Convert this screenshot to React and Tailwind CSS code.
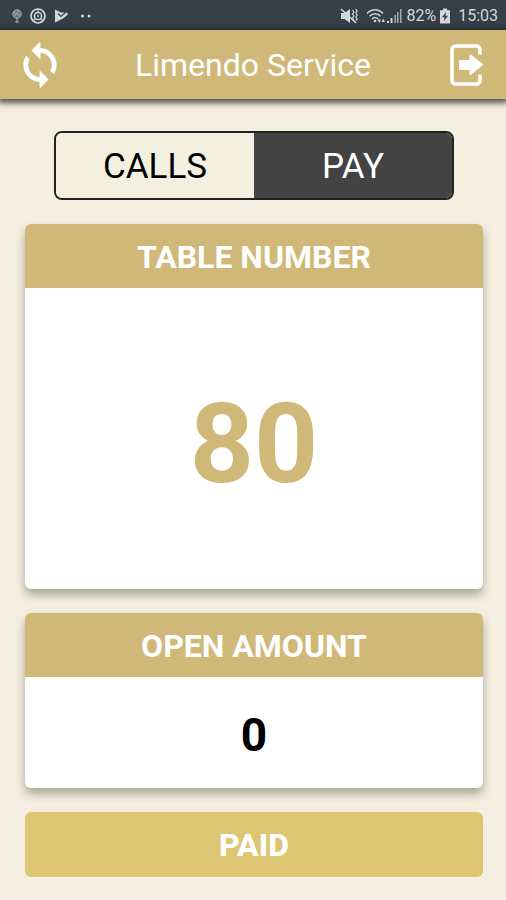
import { IoMdSync } from 'react-icons/io';

function StatusBar() {
  return (
    <div className="flex h-[30px] items-center justify-between bg-[#363e48] pt-px pr-2 pl-3 text-[#d3d6da]">
      <div className="flex items-center gap-2">
        <svg viewBox="0 0 10 14" className="h-[14px] w-[10px]" fill="none" stroke="currentColor" opacity="0.75">
          <circle cx="5" cy="5" r="4.2" fill="#7d838a" />
          <path d="M2 3.5l6 3M2.5 7L7 2M5 9v3.4" />
          <path d="M3.4 13h3.2" strokeWidth="1.4" />
        </svg>
        <svg viewBox="0 0 16 16" className="h-4 w-4" fill="none" stroke="currentColor">
          <circle cx="8" cy="8" r="7" strokeWidth="1.7" />
          <circle cx="8" cy="8" r="3.6" strokeWidth="1.5" />
          <circle cx="8" cy="8" r="1" fill="currentColor" stroke="none" />
          <path d="M8 4.4V1.6M3.5 12.5l2-2M12.5 12.5l-2-2" strokeWidth="1.1" />
        </svg>
        <svg viewBox="0 0 14 14" className="h-[14px] w-[14px]">
          <path d="M1 0.5L7 3.6 13.5 3.6V6L9 9.5 1 13.5z" fill="currentColor" />
          <path d="M4 4.5l3 3L12 3" fill="none" stroke="#363e48" strokeWidth="1.1" />
        </svg>
        <svg viewBox="0 0 20 4" className="h-1 w-5" fill="currentColor">
          <circle cx="6.5" cy="2" r="1.5" />
          <circle cx="13" cy="2" r="1.5" />
        </svg>
      </div>
      <div className="flex items-center gap-1">
        <svg viewBox="0 0 18 16" className="h-4 w-[18px]" fill="currentColor">
          <path d="M1 5h3.5L10 1v14L4.5 11H1z" />
          <path d="M1 1l15 14" stroke="currentColor" strokeWidth="1.5" />
          <path
            d="M12.5 2l1.5 2-1.5 2 1.5 2-1.5 2 1.5 2M15.8 1l1.4 2-1.4 2 1.4 2-1.4 2 1.4 2-1.4 2"
            fill="none"
            stroke="currentColor"
            strokeWidth="1.2"
          />
        </svg>
        <div className="flex items-center pl-1">
          <svg viewBox="0 0 20 16" className="h-4 w-5" fill="none" stroke="currentColor" strokeWidth="1.4">
            <path d="M1 5.5C5.5 0.5 12.5 0.5 17 5.5M3.5 8.3c3.2-3.4 7.8-3.4 11 0M6 11c1.9-2 4.1-2 6 0" />
            <circle cx="9" cy="13" r="1.3" fill="currentColor" stroke="none" />
            <path d="M11.5 11.5H15l-1.75 3.5zM15.5 14H19l-1.75-3.5z" fill="currentColor" stroke="none" />
          </svg>
          <svg viewBox="0 0 16 16" className="h-4 w-4" fill="currentColor">
            <path d="M1 13h2v2H1zM4.5 10h2v5h-2z" />
            <path d="M8.5 7H10v8H8.5zM11 4h1.5v11H11zM14 1h1.5v14H14z" opacity="0.7" />
          </svg>
        </div>
        <span className="text-base leading-5">82%</span>
        <svg viewBox="0 0 10 16" className="h-4 w-[10px]">
          <path d="M3 0.5h4v1.8h3v13.2H0V2.3h3z" fill="currentColor" />
          <path d="M6 4L2 9.3h2.5L4 13l4-5.3H5.5z" fill="#363e48" />
        </svg>
        <span className="pl-1 text-base leading-5">15:03</span>
      </div>
    </div>
  );
}

function ExitIcon() {
  return (
    <svg viewBox="0 0 36 44" className="h-11 w-9" fill="none" stroke="currentColor">
      <path
        d="M32 11.5V6.5A3.5 3.5 0 0 0 28.5 3h-21A3.5 3.5 0 0 0 4 6.5v31A3.5 3.5 0 0 0 7.500 41h21a3.5 3.5 0 0 0 3.5-3.5V31.5"
        strokeWidth="3.6"
      />
      <path
        d="M12 18H22.5V12.5L34 21.500 22.5 31V26H12z"
        fill="currentColor"
        strokeWidth="2"
        strokeLinejoin="round"
      />
    </svg>
  );
}

function Header() {
  return (
    <header className="flex h-[69px] items-center justify-between bg-[#d0b978] px-4 text-white shadow-[0_2px_6px_2px_rgba(0,0,0,0.65)]">
      <button type="button" aria-label="Refresh" className="flex w-12 justify-center">
        <IoMdSync
          className="h-[52px] w-[52px] shrink-0 stroke-current"
          strokeWidth="8"
          strokeLinejoin="round"
        />
      </button>
      <h1 className="text-[32px] leading-10">Limendo Service</h1>
      <button type="button" aria-label="Log out" className="flex w-12 justify-center">
        <ExitIcon />
      </button>
    </header>
  );
}

function Card({ title, children }) {
  return (
    <section className="overflow-hidden rounded-md bg-white shadow-[0_6px_10px_rgba(60,60,40,0.4)]">
      <h2 className="bg-[#d0b978] pt-[13px] pb-[11px] text-center text-[32px] leading-10 font-bold text-white">
        {title}
      </h2>
      {children}
    </section>
  );
}

export default function App() {
  return (
    <div className="min-h-screen bg-[#f4efe1] font-['Roboto',sans-serif]">
      <StatusBar />
      <Header />

      <main className="flex flex-col gap-6 pt-8 pr-[23px] pb-[23px] pl-[25px]">
        <div className="mx-[29px] flex h-[69px] overflow-hidden rounded-lg border-2 border-[#222222] text-[35px]">
          <button type="button" className="flex-1 bg-[#f4f0e0] pt-1 text-black">
            CALLS
          </button>
          <button type="button" aria-pressed="true" className="flex-1 bg-[#434343] pt-1 text-white">
            PAY
          </button>
        </div>

        <Card title="TABLE NUMBER">
          <p className="pt-24 pb-[85px] text-center text-[112px] leading-[120px] font-bold text-[#d0b978]">
            80
          </p>
        </Card>

        <Card title="OPEN AMOUNT">
          <p className="pt-[34px] pb-[29px] text-center text-[46px] leading-12 font-bold text-black">0</p>
        </Card>

        <button
          type="button"
          className="rounded-md bg-[#dcc673] pt-[13px] pb-3 text-[32px] leading-10 font-extrabold text-white"
        >
          PAID
        </button>
      </main>
    </div>
  );
}
